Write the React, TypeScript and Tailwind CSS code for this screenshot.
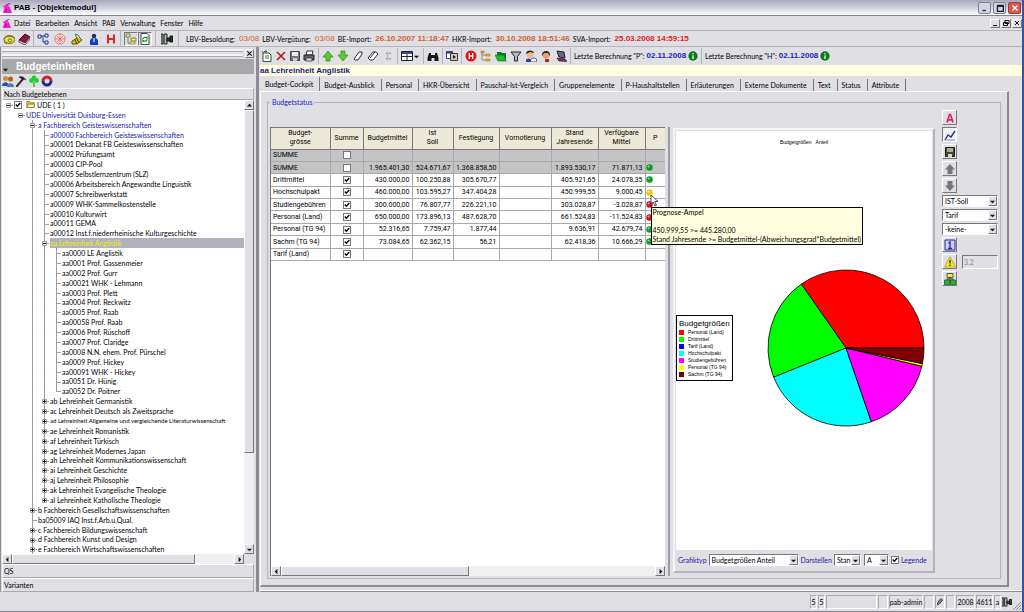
import { useState, type ReactNode } from "react";
import clsx from "clsx";

/* ---------- icons ---------- */

const icons: Record<string, ReactNode> = {
  app: (
    <>
      <path d="M1 12 3 6 1 4 3 3 6 5 9 4 12 12Z" fill="#f020d0" />
      <circle cx="6" cy="3" r="2" fill="#f020d0" />
      <path d="M7 1h3M5 7v4" stroke="#7a1070" />
    </>
  ),
  phone: (
    <>
      <ellipse cx="6.5" cy="6.5" rx="5.5" ry="4" fill="#e3e04a" stroke="#6e6a10" />
      <path d="M1 6c1-3 7-4 10-1M1 9l3 2" stroke="#6e6a10" fill="none" />
      <circle cx="7" cy="7.5" r="1.6" fill="#fff9b0" stroke="#6e6a10" />
    </>
  ),
  book: (
    <>
      <path d="M1 7 7 1l5 3-5 6Z" fill="#8b1546" stroke="#3d0820" />
      <path d="m1 7 6 3 5-6v2l-5 6-6-3Z" fill="#f1dfe6" stroke="#3d0820" strokeWidth=".7" />
    </>
  ),
  org: (
    <path d="M1 2h3v3H1zM8 1h3v3H8zM8 8h3v3H8zM4 3h4M6 3v6h2" fill="#dfe7ff" stroke="#1c3fa8" />
  ),
  gauge: (
    <>
      <circle cx="6" cy="6" r="5.2" fill="#f8dcd8" stroke="#d98a84" />
      <path d="M6 1v10M1 6h10M3 3l6 6M9 3 3 9" stroke="#d9675e" strokeWidth=".7" />
    </>
  ),
  bee: (
    <>
      <path d="m1 8 7-4 3 3-5 4H1Z" fill="#d8c21a" stroke="#5b520a" />
      <path d="m4 7 2 4m0-5 2 4" stroke="#3b3505" />
      <path d="M6 5 4 1l3 1 2 3" fill="#e9efcf" stroke="#52733a" />
    </>
  ),
  person: (
    <>
      <circle cx="6" cy="3" r="2.2" fill="#2b2b55" />
      <path d="M2 12V7l2-2h4l2 2v5Z" fill="#1742c8" />
      <path d="M5.500 5h1v4h-1z" fill="#fff" />
    </>
  ),
  hRed: <path d="M3 1.500v9M9 1.500v9M3 6h6" stroke="#e02424" strokeWidth="2" />,
  folders: (
    <>
      <path d="M1 1h4v3H1zM6 5h5v3H6z" fill="#efe98a" stroke="#8b8432" />
      <path d="M3 4v6h3" stroke="#777" fill="none" />
      <path d="M5 9h5v2H5z" fill="#efe98a" stroke="#8b8432" strokeWidth=".7" />
    </>
  ),
  refresh: (
    <>
      <path d="M2 .5h6l2 2v9H2z" fill="#fff" stroke="#444" />
      <path d="M4 6c0-2 3-2 4-1V3.500M8 6.500c0 2-3 2-4 1V9" stroke="#118a2c" fill="none" strokeWidth="1.200" />
    </>
  ),
  plug: (
    <>
      <path d="M0 1h2v10H0zM3 1h3v10H3z" fill="#a9b3ab" stroke="#1e2820" />
      <path d="M6 5h3v3H6zM9 3h2.500v6H9z" fill="#33423a" stroke="#111" />
    </>
  ),
  people: (
    <>
      <circle cx="3.500" cy="3.500" r="2.500" fill="#d88a3c" />
      <path d="M0 11c0-5 7-5 7 0Z" fill="#254fb0" />
      <circle cx="8.500" cy="4" r="2.500" fill="#b5602a" />
      <path d="M5 12c0-5 7-5 7 0Z" fill="#4c78d0" />
    </>
  ),
  hammer: <path d="M4 2c3-1 5 0 7 3l-2-1L2 12l-1-1 6-7Z" fill="#222" stroke="#222" strokeWidth=".6" />,
  clover: (
    <>
      <path d="M5.500 7h1v5h-1z" fill="#0a8a1c" />
      <circle cx="6" cy="3" r="2.400" fill="#16d52c" />
      <circle cx="3.500" cy="5.500" r="2.400" fill="#16d52c" />
      <circle cx="8.500" cy="5.500" r="2.400" fill="#16d52c" />
    </>
  ),
  swirl: (
    <>
      <path d="M2 6a4 4 0 0 1 8 0" stroke="#d6202a" strokeWidth="3" fill="none" />
      <path d="M10 6a4 4 0 0 1-8 0" stroke="#1a2c9a" strokeWidth="3" fill="none" />
    </>
  ),
  newDoc: (
    <>
      <path d="M2 3h6l2 2v6.500H2z" fill="#fff" stroke="#444" />
      <path d="M3 1.500h3M4 6h4M4 8h4" stroke="#2f8a2f" />
      <path d="M1 1l2 3M5 0v3" stroke="#444" strokeWidth=".8" />
    </>
  ),
  cross: <path d="m2 2 8 8M10 2 2 10" stroke="#b01818" strokeWidth="1.500" />,
  disk: (
    <>
      <path d="M1.500 1.500h9v9h-9z" fill="#777" stroke="#444" />
      <path d="M3 2h6v4H3z" fill="#eee" />
      <path d="M4 8h4v3H4z" fill="#ccc" />
    </>
  ),
  diskDark: (
    <>
      <path d="M1.500 1.500h9v9h-9z" fill="#44482c" stroke="#1d2010" />
      <path d="M3 2h6v4H3z" fill="#a8ab98" />
      <path d="M4 8h4v3H4z" fill="#d5d6cc" />
    </>
  ),
  printer: (
    <>
      <path d="M4 1h6l-1 4H3Z" fill="#fff" stroke="#333" />
      <path d="M1 5h10v5H1Z" fill="#666" stroke="#222" />
      <path d="M3 8h6v3H3Z" fill="#ddd" stroke="#222" strokeWidth=".7" />
    </>
  ),
  up: <path d="m6 1 5 6H8v4H4V7H1Z" fill="#5cc832" stroke="#3c8f22" strokeWidth=".8" />,
  down: <path d="m6 11 5-6H8V1H4v4H1Z" fill="#5cc832" stroke="#3c8f22" strokeWidth=".8" />,
  upGray: <path d="m6 1 5 5.500H8.500V11h-5V6.500H1Z" fill="#777" />,
  downGray: <path d="m6 11 5-5.500H8.500V1h-5v4.500H1Z" fill="#777" />,
  eraser: <path d="m2 9 5-7h3v2l-4 6H3Z" fill="#fff" stroke="#333" />,
  erasers: (
    <>
      <path d="m1 8 5-6h3l2 2-5 6H3Z" fill="#fff" stroke="#333" />
      <path d="m3 8 5-6" stroke="#333" />
    </>
  ),
  sigma: <path d="M8.500 4V3H4l2.500 3L4 9h4.500V8" stroke="#888" fill="none" strokeWidth=".8" />,
  grid: (
    <>
      <path d="M.5 1.500h11v9H.5z" fill="#fff" stroke="#222" />
      <path d="M1 2h10v2H1z" fill="#3a4a9a" />
      <path d="M1 6.500h10M6 4v6" stroke="#222" />
    </>
  ),
  binoculars: (
    <path d="M2 3h2v2h4V3h2l1.500 5v3H7.500V8h-3v3H.5V8Z" fill="#181818" />
  ),
  windows: (
    <>
      <path d="M.5 1.500h6v7h-6z" fill="#fff" stroke="#2c3f80" />
      <path d="M4.500 3.500h7v7h-7z" fill="#d9c9a8" stroke="#3c3c3c" />
      <path d="M1 2h5v1.500H1z" fill="#2c3f80" />
      <path d="m7 5 3 2-3 2Z" fill="#222" />
    </>
  ),
  hBadge: (
    <>
      <circle cx="6" cy="6" r="5.500" fill="#e01414" />
      <path d="M4.300 3v6M7.700 3v6M4.300 6h3.400" stroke="#fff" strokeWidth="1.300" />
    </>
  ),
  list: (
    <>
      <path d="M2 1v9h5M2 5h5" stroke="#888" fill="none" />
      <path d="M1 1h3v2H1zM6 4h4v2H6zM6 9h4v2H6z" fill="#f0b43c" stroke="#a87414" strokeWidth=".6" />
    </>
  ),
  folderGreen: (
    <>
      <path d="M2 2h4l1 1h4v7H2Z" fill="#0d7a1e" />
      <path d="M0 5h9l2 6H3Z" fill="#1dba35" stroke="#0d6a1a" strokeWidth=".6" />
    </>
  ),
  filter: <path d="M1 2h10L7.500 6.500V11h-3V6.500Z" fill="#b9bcc2" stroke="#222" />,
  faces: (
    <>
      <circle cx="5" cy="4.500" r="3.600" fill="#f0b890" />
      <path d="M1 4c0-5 8-4 8-1L5 2Z" fill="#222" />
      <path d="M5 12c0-5 7-5 7-1v1Z" fill="#fff" stroke="#3a3a7a" />
      <path d="M1 10c1-2 4-2 5 0v2H1Z" fill="#2440b0" />
    </>
  ),
  face: (
    <>
      <circle cx="6" cy="5" r="3.600" fill="#e8a070" />
      <path d="M2 6c-1-6 9-7 8 0L8 3H4Z" fill="#222" />
      <path d="M5 9h4v3H5Z" fill="#c02020" />
    </>
  ),
  laptop: (
    <>
      <path d="m2 1 7 1 1 6-6-1Z" fill="#5d6c9a" stroke="#222" />
      <path d="m2 8 8 1 2 2.500-8-.5Z" fill="#8e2a4a" stroke="#222" strokeWidth=".7" />
    </>
  ),
  info: (
    <>
      <circle cx="6" cy="6" r="5.600" fill="#0b7d1d" />
      <path d="M6 2.500v1.300M6 5v4.500" stroke="#fff" strokeWidth="1.500" />
    </>
  ),
  letterA: <path d="M3 10.500 5.500 2.500h1L9 10.500M4 7.800h4" stroke="#e0285a" strokeWidth="1.700" fill="none" />,
  chart: (
    <>
      <path d="M1 11 4 6l3 2 4-6" stroke="#26357a" strokeWidth="1.400" fill="none" />
      <path d="M1 11h10" stroke="#8c96c4" />
    </>
  ),
  one: (
    <>
      <path d="M1 1h10v10H1z" fill="#c9cdf5" stroke="#2a2a90" />
      <path d="M4.500 4 6 3v6M4 9.500h4" stroke="#2a2a90" strokeWidth="1.300" fill="none" />
    </>
  ),
  warn: (
    <>
      <path d="M6 .8 11.500 11H.5Z" fill="#f4ea1c" stroke="#a09a10" strokeWidth=".7" />
      <path d="M6 4v3.500M6 8.500V10" stroke="#222" strokeWidth="1.200" />
    </>
  ),
  tree: (
    <>
      <path d="M3 .5h6v4H3z" fill="#f3ef3a" stroke="#333" strokeWidth=".8" />
      <path d="M6 4.500v2M3 7.500V6h6v1.500" stroke="#333" fill="none" />
      <path d="M.5 7H5.500v4.500H.5zM6.500 7h5v4.500h-5z" fill="#2faf3c" stroke="#1c5e24" strokeWidth=".8" />
    </>
  ),
  pencil: <path d="m2 10 1-4 4-5 3 2-5 6Z" fill="#888" stroke="#111" />,
  folder: (
    <>
      <path d="M1 2h4l1 1.500h5V10H1Z" fill="#c9c14c" stroke="#6f6a1c" strokeWidth=".8" />
      <path d="M3 5.500h9L10 10H1Z" fill="#f5f0a0" stroke="#6f6a1c" strokeWidth=".8" />
    </>
  ),
};

function Icon({ name, className = "size-3" }: { name: string; className?: string }) {
  return (
    <svg viewBox="0 0 12 12" className={clsx("shrink-0", className)} fill="none" aria-hidden="true">
      {icons[name]}
    </svg>
  );
}

/* ---------- small controls ---------- */

const raised = "border border-t-white border-l-white border-r-[#77777d] border-b-[#77777d] bg-[#e0dfe3]";
const panelRaised = "border border-t-white border-l-white border-r-[#a8a8ae] border-b-[#a8a8ae] bg-[#e0dfe3]";
const sunken = "border border-t-[#77777d] border-l-[#77777d] border-r-white border-b-white";
const softSunken = "border border-t-[#a8a8ae] border-l-[#a8a8ae] border-r-white border-b-white";

function ToolButton({ name, label, className }: { name: string; label: string; className?: string }) {
  return (
    <button type="button" aria-label={label} className={clsx("flex shrink-0 items-center justify-center", className)}>
      <Icon name={name} />
    </button>
  );
}

function Sep() {
  return <span className="mx-[3px] h-4 w-px shrink-0 bg-[#b4b4ba]" />;
}

function Arrow({ dir, className }: { dir: "up" | "down" | "left" | "right"; className?: string }) {
  const d = { up: "M1 5h6L4 2Z", down: "M1 3h6L4 6Z", left: "M5 1v6L2 4Z", right: "M3 1v6l3-3Z" }[dir];
  return (
    <span className={clsx("flex shrink-0 items-center justify-center", raised, className)}>
      <svg viewBox="0 0 8 8" className="size-[7px]"><path d={d} fill="#111" /></svg>
    </span>
  );
}

function Combo({ label, options, className }: { label: string; options: string[]; className?: string }) {
  return (
    <div className={clsx("relative h-3 bg-white", sunken, className)}>
      <select aria-label={label} className="block h-full w-full appearance-none bg-transparent pl-[2px] leading-[10px] outline-none">
        {options.map((o) => <option key={o}>{o}</option>)}
      </select>
      <Arrow dir="down" className="pointer-events-none absolute top-0 right-0 h-full w-[9px]" />
    </div>
  );
}

function Check({ id, label, checked = false }: { id?: string; label?: string; checked?: boolean }) {
  return (
    <span className="relative inline-block size-2 align-middle">
      <input id={id} type="checkbox" aria-label={label} defaultChecked={checked}
             className="peer block size-2 appearance-none border border-[#77777d] bg-white" />
      <svg viewBox="0 0 8 8" className="pointer-events-none absolute inset-0 hidden size-2 peer-checked:block">
        <path d="M1.800 3.500 3.300 5.300 6.300 2" stroke="#000" strokeWidth="1.300" fill="none" />
      </svg>
    </span>
  );
}

/* ---------- data ---------- */

type Node = { text: string; level: number; kind: "open" | "closed" | "leaf"; last?: boolean; blue?: boolean; selected?: boolean };

const leaf = (level: number) => (text: string): Node => ({ text, level, kind: "leaf" });
const closed = (level: number) => (text: string): Node => ({ text, level, kind: "closed" });

const nodes: Node[] = [
  { text: "UDE ( 1 )", level: 0, kind: "open", last: true },
  { text: "UDE Universität Duisburg-Essen", level: 1, kind: "open", last: true, blue: true },
  { text: "a Fachbereich Geisteswissenschaften", level: 2, kind: "open", blue: true },
  { text: "a00000 Fachbereich Geisteswissenschaften", level: 3, kind: "leaf", blue: true },
  ...[
    "a00001 Dekanat FB Geisteswissenschaften",
    "a00002 Prüfungsamt",
    "a00003 CIP-Pool",
    "a00005 Selbstlernzentrum (SLZ)",
    "a00006 Arbeitsbereich Angewandte Linguistik",
    "a00007 Schreibwerkstatt",
    "a00009 WHK-Sammelkostenstelle",
    "a00010 Kulturwirt",
    "a00011 GEMA",
    "a00012 Inst.f.niederrheinische Kulturgeschichte",
  ].map(leaf(3)),
  { text: "aa Lehreinheit Anglistik", level: 3, kind: "open", selected: true },
  ...[
    "aa0000 LE Anglistik",
    "aa0001 Prof. Gassenmeier",
    "aa0002 Prof. Gurr",
    "aa00021 WHK - Lehmann",
    "aa0003 Prof. Plett",
    "aa0004 Prof. Reckwitz",
    "aa0005 Prof. Raab",
    "aa00058 Prof. Raab",
    "aa0006 Prof. Rüschoff",
    "aa0007 Prof. Claridge",
    "aa0008 N.N. ehem. Prof. Pürschel",
    "aa0009 Prof. Hickey",
    "aa00091 WHK - Hickey",
    "aa0051 Dr. Hünig",
  ].map(leaf(4)),
  { text: "aa0052 Dr. Poitner", level: 4, kind: "leaf", last: true },
  ...[
    "ab Lehreinheit Germanistik",
    "ac Lehreinheit Deutsch als Zweitsprache",
    "ad Lehreinheit Allgemeine und vergleichende Literaturwissenschaft",
    "ae Lehreinheit Romanistik",
    "af Lehreinheit Türkisch",
    "ag Lehreinheit Modernes Japan",
    "ah Lehreinheit Kommunikationswissenschaft",
    "ai Lehreinheit Geschichte",
    "aj Lehreinheit Philosophie",
    "ak Lehreinheit Evangelische Theologie",
  ].map(closed(3)),
  { text: "al Lehreinheit Katholische Theologie", level: 3, kind: "closed", last: true },
  { text: "b Fachbereich Gesellschaftswissenschaften", level: 2, kind: "closed" },
  { text: "ba05009 IAQ Inst.f.Arb.u.Qual.", level: 2, kind: "leaf" },
  { text: "c Fachbereich Bildungswissenschaft", level: 2, kind: "closed" },
  { text: "d Fachbereich Kunst und Design", level: 2, kind: "closed" },
  { text: "e Fachbereich Wirtschaftswissenschaften", level: 2, kind: "closed" },
];

const tabs = [
  "Budget-Cockpit", "Budget-Ausblick", "Personal", "HKR-Übersicht", "Pauschal-Ist-Vergleich", "Gruppenelemente",
  "P-Haushaltstellen", "Erläuterungen", "Externe Dokumente", "Text", "Status", "Attribute",
];

const columns: [string, string][] = [
  ["Budget-\ngrösse", "w-[59px]"],
  ["Summe", "w-[33px]"],
  ["Budgetmittel", "w-[49px]"],
  ["Ist\nSoll", "w-[41px]"],
  ["Festlegung", "w-[46px]"],
  ["Vornotierung", "w-[52px]"],
  ["Stand\nJahresende", "w-[47px]"],
  ["Verfügbare\nMittel", "w-[47px]"],
  ["P", ""],
];

type Lamp = "green" | "yellow" | "red";
type Row = { name: string; sum: boolean; cells: string[]; lamp?: Lamp; total?: boolean };

const rows: Row[] = [
  { name: "SUMME", sum: false, cells: ["", "", "", "", "", ""], total: true },
  { name: "SUMME", sum: false, cells: ["1.965.401,30", "524.671,67", "1.368.858,50", "", "1.893.530,17", "71.871,13"], lamp: "green", total: true },
  { name: "Drittmittel", sum: true, cells: ["430.000,00", "100.250,88", "305.670,77", "", "405.921,65", "24.078,35"], lamp: "green" },
  { name: "Hochschulpakt", sum: true, cells: ["460.000,00", "103.595,27", "347.404,28", "", "450.999,55", "9.000,45"], lamp: "yellow" },
  { name: "Studiengebühren", sum: true, cells: ["300.000,00", "76.807,77", "226.221,10", "", "303.028,87", "-3.028,87"], lamp: "red" },
  { name: "Personal (Land)", sum: true, cells: ["650.000,00", "173.896,13", "487.628,70", "", "661.524,83", "-11.524,83"], lamp: "red" },
  { name: "Personal (TG 94)", sum: true, cells: ["52.316,65", "7.759,47", "1.877,44", "", "9.636,91", "42.679,74"], lamp: "green" },
  { name: "Sachm (TG 94)", sum: true, cells: ["73.084,65", "62.362,15", "56,21", "", "62.418,36", "10.666,29"], lamp: "green" },
  { name: "Tarif (Land)", sum: true, cells: ["", "", "", "", "", ""] },
];

const lampColor: Record<Lamp, string> = { green: "#0c9a2a", yellow: "#f0c810", red: "#cc1414" };

// end = angle in degrees, counted anticlockwise from east
const slices = [
  { name: "Personal (Land)", color: "#ff0000", end: 125 },
  { name: "Drittmittel", color: "#00ff00", end: 202 },
  { name: "Tarif (Land)", color: "#0000ff", end: 202 },
  { name: "Hochschulpakt", color: "#00ffff", end: 289 },
  { name: "Studiengebühren", color: "#ff00ff", end: 346.5 },
  { name: "Personal (TG 94)", color: "#ffff00", end: 348.5 },
  { name: "Sachm (TG 94)", color: "#800000", end: 360 },
];

/* ---------- window chrome ---------- */

function TitleBar() {
  return (
    <header className="flex h-4 shrink-0 items-center border-b border-[#85858f] bg-gradient-to-b from-[#a9a9be] via-[#cfcfdb] to-white pt-px pr-px pl-[2px]">
      <Icon name="app" className="size-[10px]" />
      <h1 className="ml-[2px] flex-1 font-['Liberation_Sans',sans-serif] text-[8px] font-bold">PAB - [Objektemodul]</h1>
      <div className="flex gap-[2px]">
        {["M3 9h4", "M3 3h7v7H3zM3 4h7", "m3 3 6 6M9 3 3 9"].map((d, i) => (
          <button key={d} type="button" aria-label={["Minimieren", "Maximieren", "Schließen"][i]}
                  className={clsx("flex h-3 w-[13px] items-center justify-center rounded-[2px] border",
                    i === 2 ? "border-[#a33b33] bg-[#d9594e]" : "border-[#7d7d9a] bg-[#d5d5e2]")}>
            <svg viewBox="0 0 12 12" className="size-[10px]">
              <path d={d} fill="none" stroke={i === 2 ? "#fff" : "#222"} strokeWidth="1.600" />
            </svg>
          </button>
        ))}
      </div>
    </header>
  );
}

function MenuBar() {
  return (
    <nav className="flex h-[15px] shrink-0 items-center border-b border-[#b4b4ba] pl-[2px]">
      <Icon name="app" className="mr-[3px] size-[9px]" />
      <div className="flex flex-1 gap-[5px]">
        {["Datei", "Bearbeiten", "Ansicht", "PAB", "Verwaltung", "Fenster", "Hilfe"].map((m) => (
          <button key={m} type="button">{m}</button>
        ))}
      </div>
      {["M2 6.500h4", "M3 1.500h4v3H3zM1.500 3.500h4v3h-4z", "m2 2 4 4M6 2 2 6"].map((d, i) => (
        <button key={d} type="button" aria-label={["Fenster minimieren", "Fenster wiederherstellen", "Fenster schließen"][i]}
                className={clsx("ml-px flex h-[9px] w-[10px] items-center justify-center", raised)}>
          <svg viewBox="0 0 8 8" className="size-[8px]"><path d={d} fill="none" stroke="#111" /></svg>
        </button>
      ))}
    </nav>
  );
}

function ImportBar() {
  const dates: [string, string][] = [
    ["LBV-Besoldung:", "03/08"],
    ["LBV-Vergütung:", "03/08"],
    ["BE-Import:", "26.10.2007 11:18:47"],
    ["HKR-Import:", "30.10.2008 18:51:46"],
    ["SVA-Import:", "25.03.2008 14:59:15"],
  ];
  return (
    <div className="flex h-4 shrink-0 items-center border-b border-[#b4b4ba] pl-[3px]">
      <ToolButton name="phone" label="Telefon" />
      <ToolButton name="book" label="Handbuch" className="ml-[3px]" />
      <Sep />
      <div className="flex gap-[5px]">
        <ToolButton name="org" label="Struktur" />
        <ToolButton name="gauge" label="Cockpit" />
        <ToolButton name="bee" label="Import" />
        <ToolButton name="person" label="Personen" />
        <ToolButton name="hRed" label="HKR" />
      </div>
      <Sep />
      <ToolButton name="folders" label="Baum" className={clsx("size-[14px]", sunken)} />
      <ToolButton name="refresh" label="Aktualisieren" className={clsx("size-[14px]", sunken)} />
      <Sep />
      <ToolButton name="plug" label="Verbindung" className="mx-[2px]" />
      <Sep />
      <dl className="ml-1 flex items-center gap-[3px] whitespace-nowrap">
        {dates.map(([k, v], i) => (
          <div key={k} className="flex gap-1">
            <dt>{k}</dt>
            <dd className={clsx("font-['Liberation_Sans',sans-serif] text-[8px]",
              i < 2 ? "text-[#d0622c]" : i === 4 ? "font-bold text-[#e01c1c]" : "font-bold text-[#d0622c]")}>{v}</dd>
          </div>
        ))}
      </dl>
    </div>
  );
}

/* ---------- sidebar ---------- */

function TreeGlyph({ node, col }: { node: Node; col: number }) {
  const own = col === node.level;
  const through = col < node.level && (col === 2 || (col === 3 && node.level === 4));
  return (
    <svg viewBox="0 0 12 10" preserveAspectRatio="none" className="h-full w-3 shrink-0" shapeRendering="crispEdges" aria-hidden="true">
      {through && <path d="M6.500 0v10" stroke="#9a9a9a" />}
      {own && (
        <>
          {node.level > 1 && <path d={node.last ? "M6.500 0v5.500" : "M6.500 0v10"} stroke="#9a9a9a" />}
          <path d="M6 5.500h5" stroke="#9a9a9a" />
          {node.kind !== "leaf" && (
            <>
              <path d="M4.500 3.500h4v4h-4z" fill="#fff" stroke="#9a9a9a" />
              <path d={node.kind === "open" ? "M5 5.500h3" : "M5 5.500h3M6.500 4v3"} stroke="#111" />
            </>
          )}
        </>
      )}
    </svg>
  );
}

function Sidebar() {
  return (
    <aside className="flex w-[258px] shrink-0 flex-col border-r-2 border-l border-[#8c8c92] pr-[2px] pl-px">
      <div className="flex h-3 shrink-0 items-center gap-[2px]">
        <div className="flex-1 space-y-[2px]">
          <div className="h-[3px] border-b border-[#a8a8ae] bg-[#f4f4f7]" />
          <div className="h-[3px] border-b border-[#a8a8ae] bg-[#f4f4f7]" />
        </div>
        <button type="button" aria-label="Bereich schließen" className={clsx("flex size-[9px] items-center justify-center", raised)}>
          <svg viewBox="0 0 8 8" className="size-[7px]"><path d="m1.500 1.500 5 5M6.500 1.500l-5 5" stroke="#111" strokeWidth="1.200" /></svg>
        </button>
      </div>
      <div className="flex h-[15px] shrink-0 items-center bg-[#a8a8a8]">
        <svg viewBox="0 0 8 8" className="mt-2 size-[7px]"><path d="M1 2h6L4 5Z" fill="#111" /></svg>
        <h2 className="ml-[7px] font-['Liberation_Sans',sans-serif] text-[10px] font-bold text-white">Budgeteinheiten</h2>
      </div>
      <div className="flex h-[14px] shrink-0 items-center gap-px">
        <ToolButton name="people" label="Personen" />
        <ToolButton name="hammer" label="Werkzeuge" />
        <ToolButton name="clover" label="Ökologie" />
        <ToolButton name="swirl" label="Neu laden" />
      </div>
      <button type="button" className={clsx("h-3 shrink-0 pl-px text-left leading-[10px]", panelRaised)}>Nach Budgetebenen</button>
      <div className="flex min-h-0 flex-1 bg-white">
        <ul role="tree" aria-label="Budgetebenen" className="flex min-w-0 flex-1 flex-col overflow-hidden">
          {nodes.map((n) => (
            <li key={n.text} role="treeitem" aria-selected={!!n.selected}
                className={clsx("flex min-h-0 flex-1 items-center whitespace-nowrap", n.blue && "text-[#2020a8]")}>
              {Array.from({ length: n.level + 1 }, (_, c) => <TreeGlyph key={c} node={n} col={c} />)}
              {n.level === 0 && (
                <span className="mr-[2px] flex items-center gap-1">
                  <Check label="UDE" checked />
                  <Icon name="folder" className="size-[9px]" />
                </span>
              )}
              {/* very long names drop one size so they stay inside the column */}
              <span className={clsx("flex h-full items-center", n.text.length > 60 && "text-[6px]",
                n.selected && "flex-1 bg-[#b2b2bf] text-[#f0f000]")}>{n.text}</span>
            </li>
          ))}
        </ul>
        <div className="flex w-[10px] shrink-0 flex-col bg-[#f0f0f2]">
          <Arrow dir="up" className="h-[10px]" />
          <div className={clsx("flex-[343]", raised)} />
          <div className="flex-[91]" />
          <Arrow dir="down" className="h-[10px]" />
        </div>
      </div>
      <div className="mr-[10px] flex h-[10px] shrink-0 bg-[#f0f0f2]">
        <Arrow dir="left" className="w-[10px]" />
        <div className={clsx("flex-[183]", raised)} />
        <div className="flex-[39]" />
        <Arrow dir="right" className="w-[10px]" />
      </div>
      {["QS", "Varianten"].map((s) => (
        <button key={s} type="button" className={clsx("h-[14px] shrink-0 pl-px text-left", panelRaised)}>{s}</button>
      ))}
    </aside>
  );
}

/* ---------- main area ---------- */

function Calculation({ kind }: { kind: string }) {
  return (
    <span className="flex items-center gap-[2px] whitespace-nowrap">
      Letzte Berechnung "{kind}":
      <b className="font-['Liberation_Sans',sans-serif] text-[8px] text-[#2020c0]">02.11.2008</b>
      <Icon name="info" className="size-[10px]" />
    </span>
  );
}

function MainToolbar() {
  return (
    <div className="flex h-[18px] shrink-0 items-center pl-px">
      <div className="flex gap-[2px]">
        <ToolButton name="newDoc" label="Neu" />
        <ToolButton name="cross" label="Löschen" />
        <ToolButton name="disk" label="Speichern" />
        <ToolButton name="printer" label="Drucken" />
      </div>
      <Sep />
      <div className="flex gap-[3px]">
        <ToolButton name="up" label="Nach oben" />
        <ToolButton name="down" label="Nach unten" />
        <ToolButton name="eraser" label="Radieren" />
        <ToolButton name="erasers" label="Alles radieren" />
        <ToolButton name="sigma" label="Summe" />
      </div>
      <Sep />
      <ToolButton name="grid" label="Ansicht" />
      <svg viewBox="0 0 8 8" className="size-[7px]"><path d="M1 3h6L4 6Z" fill="#111" /></svg>
      <Sep />
      <ToolButton name="binoculars" label="Suchen" />
      <Sep />
      <ToolButton name="windows" label="Fenster" />
      <Sep />
      <div className="flex gap-[3px]">
        <ToolButton name="hBadge" label="HKR" />
        <ToolButton name="list" label="Liste" />
        <ToolButton name="folderGreen" label="Ordner" />
        <ToolButton name="filter" label="Filter" />
        <ToolButton name="faces" label="Personen" />
        <ToolButton name="face" label="Person" />
        <ToolButton name="laptop" label="Rechner" />
      </div>
      <Sep />
      <Calculation kind="P" />
      <Sep />
      <Calculation kind="H" />
    </div>
  );
}

function Tooltip() {
  return (
    <div role="tooltip" className="absolute top-5 left-[5px] z-20 border border-black bg-[#ffffdf] px-px text-left font-['Lato','Liberation_Sans',sans-serif] leading-[9px] whitespace-nowrap">
      <p>Prognose-Ampel</p>
      <p>&nbsp;</p>
      <p>450.999,55 &gt;= 445.280,00</p>
      <p>Stand Jahresende &gt;= Budgetmittel-(Abweichungsgrad*Budgetmittel)</p>
    </div>
  );
}

function BudgetTable() {
  return (
    <div className="flex w-[395px] shrink-0 flex-col border-t border-l border-[#77777d] bg-white font-['Roboto','Liberation_Sans',sans-serif]">
      <table className="h-[133px] w-full table-fixed border-collapse">
        <thead>
          <tr className="h-[21px] bg-[#ece9d8]">
            {columns.map(([c, w]) => (
              <th key={c} scope="col" className={clsx("border-r border-b border-[#77777d] p-0 leading-[9px] font-normal whitespace-pre-line last:border-r-0", w)}>{c}</th>
            ))}
          </tr>
        </thead>
        <tbody>
          {rows.map((r, i) => (
            <tr key={i} className={clsx("h-3", r.total && "bg-[#c4c4c4]")}>
              <th scope="row" className="border-r border-b border-[#a8a8a8] py-0 pr-0 pl-[2px] text-left font-normal whitespace-nowrap">{r.name}</th>
              <td className="border-r border-b border-[#a8a8a8] p-0 text-center leading-[8px]"><Check label={r.name} checked={r.sum} /></td>
              {r.cells.map((c, k) => (
                <td key={k} className="border-r border-b border-[#a8a8a8] py-0 pr-[2px] pl-0 text-right whitespace-nowrap">{c}</td>
              ))}
              <td className="relative border-b border-[#a8a8a8] p-0">
                {r.lamp && (
                  <svg viewBox="0 0 8 8" className="size-[7px]">
                    <circle cx="4" cy="4" r="3.700" fill={lampColor[r.lamp]} />
                    <circle cx="3" cy="2.800" r="1.200" fill="#fff" opacity=".6" />
                  </svg>
                )}
                {r.lamp === "yellow" && (
                  <>
                    <Tooltip />
                    <svg viewBox="0 0 9 14" className="absolute top-[7px] left-1 z-30 h-[14px] w-[9px]">
                      <path d="M1 1v9l2.200-2 1.600 4 1.600-.7-1.600-3.800H8Z" fill="#fff" stroke="#223" strokeWidth=".8" />
                    </svg>
                  </>
                )}
              </td>
            </tr>
          ))}
        </tbody>
      </table>
      <div className="flex-1" />
      <div className="flex h-[10px] shrink-0 bg-[#f0f0f2]">
        <Arrow dir="left" className="w-[10px]" />
        <div className={clsx("flex-[186]", raised)} />
        <div className="flex-[187]" />
        <Arrow dir="right" className="w-[10px]" />
      </div>
    </div>
  );
}

function Pie() {
  const r = 78;
  const point = (deg: number) => {
    const a = (deg * Math.PI) / 180;
    return `${(r * Math.cos(a)).toFixed(2)} ${(-r * Math.sin(a)).toFixed(2)}`;
  };
  return (
    <svg viewBox="-79 -79 158 158" className="w-[158px] shrink-0" role="img" aria-label="Budgetgrößen Anteil">
      {slices.map((s, i) => {
        const start = i ? slices[i - 1].end : 0;
        if (s.end === start) return null;
        return (
          <path key={s.name} d={`M0 0L${point(start)}A${r} ${r} 0 0 0 ${point(s.end)}Z`}
                fill={s.color} stroke="#000" strokeWidth=".8" />
        );
      })}
    </svg>
  );
}

function ChartPanel() {
  return (
    <section className="mt-px mb-[3px] flex min-w-0 flex-1 flex-col border-2 border-t-[#f4f4f6] border-l-[#f4f4f6] border-r-[#b4b4ba] border-b-[#b4b4ba] p-px">
      <div className="flex flex-1 flex-col bg-white font-['Liberation_Sans',sans-serif]">
        <h3 className="mt-2 flex justify-center gap-1 text-[5px] leading-[7px]">
          <span>Budgetgrößen</span>
          <span>Anteil</span>
        </h3>
        <div className="flex flex-1 items-center justify-between pr-[7px]">
          <div className="border border-black px-[2px] py-[2px]">
            <p className="text-[8px] leading-[11px]">Budgetgrößen</p>
            <ul>
              {slices.map((s) => (
                <li key={s.name} className="flex h-[7px] items-center gap-1 text-[5px] leading-[7px]">
                  <span className="size-[5px]" style={{ backgroundColor: s.color }} />
                  {s.name}
                </li>
              ))}
            </ul>
          </div>
          <Pie />
        </div>
      </div>
      <div className="flex h-5 shrink-0 items-center gap-[2px] pl-[2px] text-[#2020a8]">
        <span>Grafiktyp</span>
        <Combo label="Grafiktyp" options={["Budgetgrößen Anteil"]} className="w-[90px] text-black" />
        <span>Darstellen</span>
        <Combo label="Darstellen" options={["Stan"]} className="w-[27px] text-black" />
        <Combo label="Achse" options={["A"]} className="ml-px w-[25px] text-black" />
        <Check id="legende" checked />
        <label htmlFor="legende">Legende</label>
      </div>
    </section>
  );
}

function SideTools() {
  const button = clsx("size-[15px]", raised);
  return (
    <div className="-mt-[17px] flex w-[56px] shrink-0 flex-col gap-[2px]">
      <ToolButton name="letterA" label="Schrift" className={button} />
      <ToolButton name="chart" label="Diagramm" className={clsx("size-[15px] bg-[#f2f2f6]", sunken)} />
      <ToolButton name="diskDark" label="Speichern" className={button} />
      <ToolButton name="upGray" label="Hoch" className={button} />
      <ToolButton name="downGray" label="Runter" className={button} />
      <Combo label="Werte" options={["IST-Soll"]} />
      <Combo label="Tarif" options={["Tarif"]} />
      <Combo label="Filter" options={["-keine-"]} />
      <ToolButton name="one" label="Eins" className={button} />
      <div className="flex items-center gap-[5px]">
        <ToolButton name="warn" label="Warnung" className={button} />
        <input aria-label="Abweichungsgrad" defaultValue="3.2" disabled className={clsx("h-[14px] min-w-0 flex-1 pl-px text-[#8a8a90]", sunken)} />
      </div>
      <ToolButton name="tree" label="Hierarchie" className={button} />
    </div>
  );
}

function Main() {
  const [active, setActive] = useState(tabs[0]);
  return (
    <main className="flex min-w-0 flex-1 flex-col border-l border-[#8c8c92] pl-px">
      <MainToolbar />
      <h2 className="h-[11px] shrink-0 bg-[#ffffdf] font-['Liberation_Sans',sans-serif] text-[8px] leading-[11px] font-bold text-[#20208c]">aa Lehreinheit Anglistik</h2>
      <div role="tablist" className="flex h-[15px] shrink-0 items-end pl-px">
        {tabs.map((t) => (
          <button key={t} type="button" role="tab" aria-selected={t === active} onClick={() => setActive(t)}
                  className={clsx("border-r border-[#77777d] pr-[6px] pl-1 whitespace-nowrap", t === active ? "h-[14px] pb-px" : "h-3")}>
            {t}
          </button>
        ))}
      </div>
      <div className="mr-[13px] flex min-h-0 flex-1 flex-col border-t border-l border-r-2 border-b-2 border-t-white border-l-white border-r-[#8c8c92] border-b-[#8c8c92] pt-[6px] pr-[6px] pb-[6px] pl-[6px]">
        <fieldset className="flex min-h-0 min-w-0 flex-1 gap-[3px] border border-[#b4b4ba] px-[2px] pt-5 pb-[2px]">
          <legend className="px-[2px] leading-[9px] text-[#2020c0]">Budgetstatus</legend>
          <BudgetTable />
          <div className="w-[2px] shrink-0 bg-[#9c9ca2]" />
          <ChartPanel />
          <div className="w-px shrink-0" />
          <SideTools />
        </fieldset>
      </div>
      <div className="mt-[3px] h-[2px] shrink-0 border-b border-[#8c8c92] bg-white" />
    </main>
  );
}

function StatusBar() {
  const cell = clsx("flex h-[14px] items-center justify-center whitespace-nowrap", softSunken);
  return (
    <footer className="flex h-5 shrink-0 items-center justify-end gap-px border-b border-[#85858f] pr-px">
      <span className={clsx(cell, "w-[7px]")}>5</span>
      <span className={clsx(cell, "w-[7px]")}>5</span>
      <span className={clsx(cell, "w-[51px]")} />
      <span className={clsx(cell, "w-[10px]")} />
      <span className={clsx(cell, "w-[34px]")}>pab-admin</span>
      <span className={clsx(cell, "w-[10px]")} />
      <span className={clsx(cell, "w-[10px]")}><Icon name="pencil" className="size-[8px]" /></span>
      <span className={clsx(cell, "w-[9px]")} />
      <span className={clsx(cell, "w-[19px]")}>2008</span>
      <span className={clsx(cell, "w-[17px]")}>4611</span>
      <span className={clsx(cell, "w-[7px]")}>a</span>
      <Icon name="plug" className="size-[10px]" />
      <svg viewBox="0 0 8 8" className="mt-2 size-[8px]"><path d="M8 0 0 8M8 3 3 8M8 6 6 8" stroke="#8c8c92" /></svg>
    </footer>
  );
}

export default function App() {
  return (
    <div className="flex h-screen flex-col overflow-hidden border-r-2 border-[#3c50a8] bg-[#e0dfe3] font-['Lato','Liberation_Sans',sans-serif] text-[7px] leading-[10px] text-black">
      <TitleBar />
      <MenuBar />
      <ImportBar />
      <div className="flex min-h-0 flex-1">
        <Sidebar />
        <Main />
      </div>
      <StatusBar />
    </div>
  );
}
